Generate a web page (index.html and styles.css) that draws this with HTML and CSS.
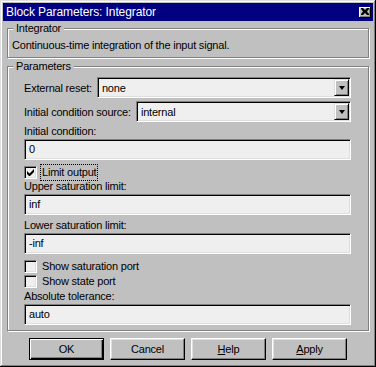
FILE: index.html
```html
<!DOCTYPE html>
<html>
<head>
    <title>Block Parameters: Integrator</title>
    <link rel="stylesheet" href="styles.css">
</head>
<body>
    <div class="window">
        <div class="titlebar">
            <span class="title">Block Parameters: Integrator</span>
            <span class="close">
                <svg width="8" height="7" viewBox="0 0 8 7"><path d="M0 0h2l2 2 2-2h2v1L6 3.5 8 6v1H6L4 5 2 7H0V6l2-2.5L0 1z" fill="#000"/></svg>
            </span>
        </div>
        <div class="content">
            <div class="group">
                <div class="group-title">Integrator</div>
                <div class="info-body">Continuous-time integration of the input signal.</div>
            </div>
            <div class="group group-params">
                <div class="group-title">Parameters</div>
                <div class="params-body">
                    <div class="select-row first">
                        <span class="label">External reset:</span>
                        <div class="select"><span class="value">none</span><span class="drop"><i></i></span></div>
                    </div>
                    <div class="select-row">
                        <span class="label">Initial condition source:</span>
                        <div class="select"><span class="value">internal</span><span class="drop"><i></i></span></div>
                    </div>
                    <div class="field-label first-label">Initial condition:</div>
                    <div class="edit">0</div>
                    <div class="check-row check-limit">
                        <span class="checkbox"><svg width="7" height="7" viewBox="0 0 7 7"><path d="M0 2v3l2 2h1l4-4V0L2.5 4.5z" fill="#000"/></svg></span>
                        <span class="check-text focused">Limit output</span>
                    </div>
                    <div class="field-label">Upper saturation limit:</div>
                    <div class="edit">inf</div>
                    <div class="field-label spaced">Lower saturation limit:</div>
                    <div class="edit">-inf</div>
                    <div class="check-row check-sat">
                        <span class="checkbox"></span>
                        <span class="check-text">Show saturation port</span>
                    </div>
                    <div class="check-row">
                        <span class="checkbox"></span>
                        <span class="check-text">Show state port</span>
                    </div>
                    <div class="field-label tight">Absolute tolerance:</div>
                    <div class="edit">auto</div>
                </div>
            </div>
            <div class="buttons">
                <button class="btn default">OK</button>
                <button class="btn">Cancel</button>
                <button class="btn"><u>H</u>elp</button>
                <button class="btn"><u>A</u>pply</button>
            </div>
        </div>
    </div>
</body>
</html>
```

FILE: styles.css
```css
body{
    margin: 0;
    background: #c0c0c0;
    font-family: "Liberation Sans", Arial, sans-serif;
    font-size: 11px;
    letter-spacing: -0.2px;
    color: #000;
}
.window{
    width: 376px;
    height: 367px;
    box-sizing: border-box;
    background: #c0c0c0;
    box-shadow: inset -1px -1px 0 #000, inset 1px 1px 0 #dfdfdf, inset -2px -2px 0 #808080, inset 2px 2px 0 #fff;
    overflow: hidden;
}
.titlebar{
    margin: 3px 3px 0;
    height: 18px;
    background: #000080;
    color: #fff;
    display: flex;
    align-items: center;
    justify-content: space-between;
    padding: 0 2px 0 3px;
    font-size: 12px;
    letter-spacing: -0.1px;
}
.close{
    width: 12px;
    height: 11px;
    box-sizing: border-box;
    background: #c0c0c0;
    box-shadow: inset -1px -1px 0 #000, inset 1px 1px 0 #fff, inset -2px -2px 0 #808080;
    display: flex;
    align-items: center;
    justify-content: center;
    padding: 0 1px 1px 0;
}
.close svg{
    display: block;
}
.content{
    padding: 0 7px;
}
.group{
    margin-top: 7px;
    border: 1px solid #808080;
    box-shadow: inset 1px 1px 0 #fff, 1px 1px 0 #fff;
    padding-bottom: 5px;
}
.group-params{
    margin-top: 8px;
}
.group-title{
    width: max-content;
    margin: -7px 0 0 5px;
    padding: 0 3px;
    background: #c0c0c0;
    line-height: 13px;
    height: 13px;
}
.info-body{
    padding: 4px 4px 0;
    line-height: 13px;
}
.params-body{
    padding: 4px 17px 0 16px;
}
.select-row{
    display: flex;
    align-items: center;
    gap: 5px;
    margin-top: 3px;
}
.select-row.first{
    margin-top: 0;
}
.select, .edit{
    height: 21px;
    box-sizing: border-box;
    background: #efefef;
    border: 1px solid;
    border-color: #808080 #fff #fff #808080;
    box-shadow: inset 1px 1px 0 #000, inset -1px -1px 0 #dfdfdf;
}
.select{
    flex: 1;
    display: flex;
    align-items: center;
    padding: 1px 1px 1px 4px;
}
.drop{
    margin-left: auto;
    width: 15px;
    height: 17px;
    box-sizing: border-box;
    background: #c0c0c0;
    border: 1px solid;
    border-color: #dfdfdf #000 #000 #dfdfdf;
    box-shadow: inset 1px 1px 0 #fff, inset -1px -1px 0 #808080;
    display: flex;
    align-items: center;
    justify-content: center;
}
.drop i{
    width: 0;
    height: 0;
    border-left: 3.5px solid transparent;
    border-right: 3.5px solid transparent;
    border-top: 4px solid #000;
    margin-top: 1px;
}
.edit{
    padding-left: 4px;
    line-height: 19px;
}
.field-label{
    line-height: 13px;
    margin-bottom: 1px;
}
.first-label{
    margin-top: 3px;
}
.spaced{
    margin-top: 4px;
}
.tight{
    margin-top: 1px;
}
.check-row{
    display: flex;
    align-items: center;
    height: 15px;
    gap: 4px;
}
.check-limit, .check-sat{
    margin-top: 5px;
}
.checkbox{
    width: 13px;
    height: 13px;
    box-sizing: border-box;
    background: #efefef;
    border: 1px solid;
    border-color: #808080 #fff #fff #808080;
    box-shadow: inset 1px 1px 0 #000, inset -1px -1px 0 #dfdfdf;
    display: flex;
    align-items: center;
    justify-content: center;
}
.check-text{
    padding: 1px 1px;
    line-height: 13px;
}
.focused{
    outline: 1px dotted #000;
    outline-offset: 0;
}
.buttons{
    display: flex;
    justify-content: center;
    gap: 6px;
    margin-top: 7px;
}
.btn{
    width: 75px;
    height: 22px;
    box-sizing: border-box;
    background: #c0c0c0;
    border: 1px solid;
    border-color: #fff #000 #000 #fff;
    box-shadow: inset -1px -1px 0 #808080, inset 1px 1px 0 #dfdfdf;
    font-family: "Liberation Sans", Arial, sans-serif;
    font-size: 11px;
    letter-spacing: -0.2px;
    color: #000;
    padding: 0;
}
.btn.default{
    border-color: #000;
    box-shadow: inset 1px 1px 0 #fff, inset -1px -1px 0 #000, inset -2px -2px 0 #808080;
}
```
